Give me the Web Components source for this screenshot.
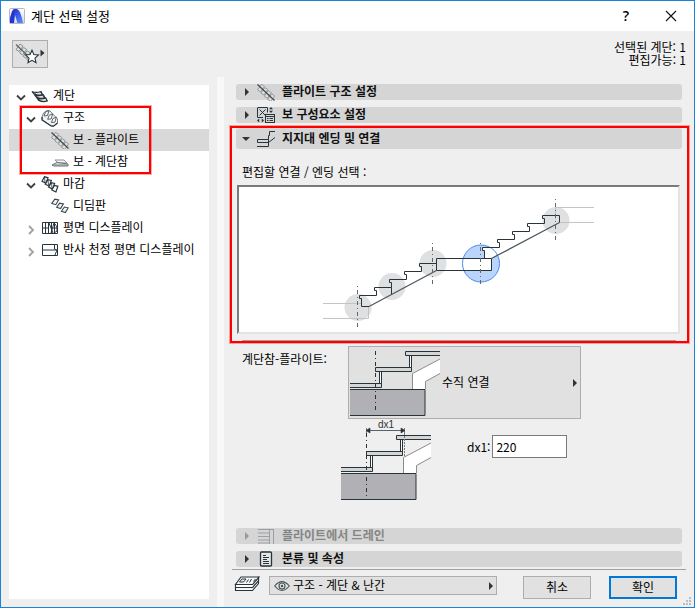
<!DOCTYPE html>
<html lang="ko">
<head>
<meta charset="utf-8">
<title>계단 선택 설정</title>
<style>
  html, body { margin: 0; height: 100%; }
  body { font: 12px/16px "Noto Sans CJK KR", "Noto Sans", sans-serif; color: #000; }
</style>
</head>
<body>
<stair-dialog></stair-dialog>

<script>
const INK = '#28343b';

/* One slanted tread repeated along the flight. */
const treads = (n, x, y, dx, dy, shape, attrs) =>
  Array.from({ length: n }, (_, i) =>
    `<path transform="translate(${x + i * dx} ${y + i * dy})" d="${shape}" ${attrs}/>`).join('');

const ICONS = {
  logo: [16, 16, `<defs><linearGradient id="g" x1="0" y1="0" x2="1" y2="1"><stop offset="0" stop-color="#1a24c8"/><stop offset="1" stop-color="#5c8cff"/></linearGradient>
    <linearGradient id="b" x1="0" y1="0" x2="0" y2="1"><stop offset="0" stop-color="#fff"/><stop offset="1" stop-color="#d4d6de"/></linearGradient></defs>
    <rect x=".5" y=".5" width="15" height="15" rx="1" fill="url(#b)" stroke="#b4b7c2"/>
    <path d="M1 15V11C2 6 3 2 5 1h3c3 1 5 8 6 14H8.500L6 7 5 15z" fill="url(#g)"/><path d="M1 15V11C2 7 3 4 4.500 3 6 5 5 10 5 15z" fill="#2433d6"/>`],
  star: [30, 22, `${treads(4, 4.5, 4.5, 3.6, 3.4, 'M-3.500 2 .5-3.500 3.500-1.500-.5 4z', 'fill="#dfe2e2" stroke="#7d8688" stroke-width=".9"')}
    <path d="M1 1.500 14 14" stroke="#59646a" stroke-width="1.200"/>
    <path d="M17 7.200l1.900 4.300 4.600.5-3.500 3.100 1 4.600-4-2.400-4 2.400 1-4.600-3.500-3.100 4.600-.5z" fill="#fff" stroke="${INK}" stroke-width="1.100"/>
    <path d="M25.500 6.500v7l4-3.500z" fill="#333"/>`],
  stair: [18, 16, `${treads(3, 1, 4, 2.4, 3.2, 'M0-.5C3 1 6 .5 9-.5l1.500 3C8 3.500 5 3.500 2 2z', `fill="#dfe3e4" stroke="${INK}" stroke-width="1.200"`)}
    <path d="M3.500 4.500l5 8M9.500 4l4.500 7" stroke="${INK}" stroke-width=".8"/>`],
  structure: [18, 18, `<path d="M1 8 2.500 4 6 1.500 9 2l7.500 8v4l-4 3.300-2.500-.6L1.500 11z" fill="#f2f3f3" stroke="#7b8387"/>
    ${treads(3, 3, 1.5, 3.7, 3.3, 'M0 5.500 1.500 1.500 5 0 3.500 5z', 'fill="#fff" stroke="#596367"')}
    <path d="M1 8v3l9 6 2.500.2 4-3.200" fill="none" stroke="${INK}" stroke-width="1.200"/>`],
  flight: [18, 17, `${treads(4, 4, 3.8, 3.4, 3.2, 'M-3.500 2 .5-3.500 3.500-1.500-.5 4z', 'fill="#e4e6e6" fill-opacity=".6" stroke="#8a9295" stroke-width=".9"')}
    <path d="M.5.5l17 16" stroke="#414c51" stroke-width="1.200"/>`],
  landing: [18, 16, `<path d="M4 6h9l3 3H7z" fill="#f4f5f5" stroke="#8b9396"/><path d="M1 11 6 8.500l11 1.500v2H3z" fill="#dfe2e3" stroke="#697276"/><path d="M1 11h16" stroke="#7b8488"/>`],
  finish: [18, 17, `${treads(4, 1, .8, 3.3, 2.9, 'M0 4.500 2.500 0 6 .8 4 6.500z', `fill="#fff" stroke="${INK}" stroke-width="1.200"`)}<path d="M3.500.8 4 6M7 3.700l.5 5.300M10.500 6.600l.5 5.300" stroke="${INK}" stroke-width=".8"/>`],
  tread: [18, 16, `${treads(3, .8, 1.2, 4.8, 3.9, 'M0 4.200 3 0 6.800.8 4 5.500z', 'fill="#f3f5f5" stroke="#3c474c" stroke-width="1.100"')}`],
  plan: [18, 16, `<path d="M1.500 2.500h15v11h-15zM1.500 8h6M4.500 2.500v11M7.500 2.500v11M10.500 2.500v11M13.500 2.500v11M8 3l4 10M13 3l-3 10M12 8h4" fill="none" stroke="${INK}"/><path d="M14 4l2 3v4l-3 2" fill="none" stroke="${INK}"/>`],
  ceiling: [18, 16, `<path d="M1.500 2.500h15v11h-15zM1.500 8h14" fill="none" stroke="${INK}"/><path d="M13.500 3v4l2.500 1-2 5" fill="none" stroke="${INK}"/>`],
  component: [18, 16, `<path d="M.5 1v9.500H6M.5.5h10v5" fill="none" stroke="${INK}"/><path d="M2.500 2.500l6 6M8.500 2.500l-6 6" stroke="${INK}"/>
    <path d="M14 0l2 2.200h-4zM14 6l2-2.200h-4zM0 13.500 2.200 11.500v4zM7 13.500 4.800 11.500v4z" fill="${INK}"/>
    <rect x="8.500" y="7.500" width="9" height="8" fill="#d5d5d5" stroke="${INK}"/><path d="M8.500 9.500h9M10 11.500h1.500m1 0h3.500M10 13.500h1.500m1 0h3.500" stroke="${INK}"/>`],
  support: [18, 16, `<path d="M18 .5h-5.500v4H11.500v4H.5v3h11V8.500M0 15.500h11.500v-4L18 6.500" fill="none" stroke="${INK}"/>`],
  drain: [18, 16, `<path d="M1 1.500h15M1 5h11M1 8.500h11M1 12h11M1 15h11M12.500 1v15M16.500 1v15" stroke="#9b9fa1" fill="none"/>`],
  document: [18, 16, `<rect x="3.500" y="1" width="11" height="14" rx="1" fill="#e4e6e6" stroke="${INK}" stroke-width="1.300"/><path d="M6 4.500h3M6 6.500h6M6 8.500h4M6 10.500h6M6 12.500h6" stroke="${INK}"/>`],
  layers: [26, 16, `<path d="M1.500 11.500v3h17l6-7v-3l-6 7z" fill="#f5f5f5" stroke="${INK}" stroke-width="1.100"/><path d="M1.500 8.500v3h17l6-7V1.500l-6 7z" fill="#fff" stroke="${INK}" stroke-width="1.100"/>
    <path d="M7 1h18l-6.500 7.500h-17z" fill="#f5f5f5" stroke="${INK}" stroke-width="1.100"/><path d="M8 3h4L9.500 6h-4zM14.500 3.500l-2 3M17.500 3l-2 3.500M21.500 3l-2 2.500" fill="none" stroke="${INK}"/>`],
  eye: [16, 12, `<path d="M.7 6Q8-2.800 15.300 6 8 14.800.7 6z" fill="none" stroke="#465156" stroke-width="1.100"/><circle cx="8" cy="6" r="3" fill="none" stroke="#465156" stroke-width="1.100"/><circle cx="8" cy="6" r="1.200" fill="#465156"/>`],
  arrow: [6, 8, `<path d="M1 0v8l4-4z" fill="currentColor"/>`],
  arrowdown: [8, 6, `<path d="M0 1h8L4 5z" fill="currentColor"/>`],
  chevopen: [10, 8, `<path d="M1 1.500l4 4 4-4" fill="none" stroke="#404040" stroke-width="1.800"/>`],
  chevclosed: [10, 10, `<path d="M3 1l4 4-4 4" fill="none" stroke="#a0a0a0" stroke-width="1.800"/>`],
  close: [12, 12, `<path d="M1 1l10 10M11 1 1 11" stroke="#111" stroke-width="1.100"/>`],
  grip: [8, 8, `<path d="M6 0h2v2H6zM3 3h2v2H3zM6 3h2v2H6zM0 6h2v2H0zM3 6h2v2H3zM6 6h2v2H6z" fill="#bdbdbd"/>`],
};

class UiElement extends HTMLElement {
  connectedCallback() {
    if (this.shadowRoot) return;
    this.attachShadow({ mode: 'open' }).innerHTML =
      `<style>*{box-sizing:border-box}button,input,select{font:inherit;color:inherit;margin:0}${this.css()}</style>${this.html()}`;
  }
}

customElements.define('ui-icon', class extends UiElement {
  css() { return ':host{display:inline-flex;flex:none}svg{display:block}'; }
  html() {
    const [w, h, body] = ICONS[this.getAttribute('name')];
    return `<svg width="${w}" height="${h}" viewBox="0 0 ${w} ${h}" aria-hidden="true">${body}</svg>`;
  }
});

/* Red callout drawn over whatever it surrounds. */
customElements.define('call-out', class extends UiElement {
  css() { return `:host{display:block;position:relative}
    .ring{position:absolute;inset:var(--ring,0);border:2px solid #f00;outline:1px solid #ff000055;outline-offset:0;pointer-events:none}`; }
  html() { return '<slot></slot><div class="ring"></div>'; }
});

customElements.define('title-bar', class extends UiElement {
  css() { return `:host{display:flex;align-items:center;height:30px;background:#fff;padding:0 13px 0 8px}
    h1{font-size:13px;line-height:20px;font-weight:400;margin:0 auto 0 6px}
    button{border:0;background:none;padding:0;width:20px;height:20px;display:flex;align-items:center;justify-content:center}
    .help{font:600 14px/20px "Open Sans",sans-serif;margin-right:25px}`; }
  html() { return `<ui-icon name="logo"></ui-icon><h1><slot></slot></h1>
    <button class="help" aria-label="도움말">?</button><button aria-label="닫기"><ui-icon name="close"></ui-icon></button>`; }
});

customElements.define('tree-row', class extends UiElement {
  css() { return `:host{display:block}
    button{display:flex;align-items:center;width:100%;height:22px;border:0;background:none;text-align:left;white-space:nowrap;
      padding:0 0 0 calc(7px + 10px * ${this.getAttribute('level')})}
    :host([selected]) button{background:#d9d9d9}
    .chev{width:10px;margin-right:5px;display:flex;padding-top:3px}
    .pic{width:18px;margin-right:4px}
    .text{padding-bottom:2px}`; }
  html() {
    const s = this.getAttribute('state');
    return `<button><span class="chev">${s ? `<ui-icon name="chev${s}"></ui-icon>` : ''}</span>
      <ui-icon class="pic" name="${this.getAttribute('icon')}"></ui-icon><span class="text"><slot></slot></span></button>`;
  }
});

customElements.define('section-bar', class extends UiElement {
  css() { return `:host{display:block}
    button{display:flex;align-items:center;width:100%;height:16px;border:0;border-radius:3px;background:#d5d5d5;padding:0 8px;text-align:left;font-weight:700;color:#111}
    :host([open]) button{height:21px;padding-left:6px}
    .mark{width:13px;display:flex;color:#333}
    :host([open]) .mark{width:15px}
    ui-icon.pic{margin-right:7px}
    .text{line-height:16px;padding-bottom:2px}
    button:disabled{color:#858585}
    button:disabled .mark{color:#999}`; }
  html() { return `<button ${this.hasAttribute('disabled') ? 'disabled' : ''} aria-expanded="${this.hasAttribute('open')}">
      <span class="mark"><ui-icon name="${this.hasAttribute('open') ? 'arrowdown' : 'arrow'}"></ui-icon></span>
      <ui-icon class="pic" name="${this.getAttribute('icon')}"></ui-icon><span class="text"><slot></slot></span></button>`; }
});

customElements.define('stair-preview', class extends UiElement {
  css() { return `:host{display:block;background:#fff;border:2px solid;border-color:#7a7a7a #e3e3e3 #e3e3e3 #7a7a7a}
    svg{display:block;width:100%;height:145px}`; }
  html() { return `<svg viewBox="239 187 439 145" role="img" aria-label="계단 단면" fill="none">
    <g fill="#dfe0e2"><circle cx="358" cy="307.500" r="13.500"/><circle cx="392" cy="286.500" r="13.500"/><circle cx="433" cy="263.500" r="13.500"/><circle cx="556" cy="220.500" r="13.500"/></g>
    <circle cx="481" cy="263.500" r="18.500" fill="#bad4fc"/>
    <path d="M484.500 258.500v-8h-2v-3h17v5l-8 6v12H462v-12z" fill="#fff"/>
    <circle cx="481" cy="263.500" r="18.500" stroke="#4a8cf0"/>
    <path d="M323 303.500h38M323 318.500h45.500v-12M594 207.500h-38.500v12M559 222.500h35" stroke="#c4c4c4"/>
    <g stroke="${INK}">
      <path d="M369 306.500h-7.500v-8h-2v-3h17v-5h-2v-3h17v-5h-2v-3h17v-5h-2v-3h17v-5h-2v-3h17M391.500 287.500v7"/>
      <path d="M436.500 258.500h55v12h-55z"/>
      <path d="M484.500 258.500v-8h-2v-3h17v-5h-2v-3h17v-5h-2v-3h17v-5h-2v-3h17v-5h-2v-3h17v7"/>
      <path d="M369 306.500l67.500-36M491.500 258.500l68-36" stroke="#4c565b" stroke-width="1.200"/>
    </g>
    <path d="M357.500 286v41M432.500 243v41M480.500 243v41M555.500 199v41" stroke="#666" stroke-dasharray="1 3 4 3"/></svg>`; }
});

/* Tread, riser, slab and stringer detail; the "dimension" attribute adds the dx1 measure. */
customElements.define('stair-detail', class extends UiElement {
  css() { return ':host{display:block;flex:none}svg{display:block}text{font:10px "Liberation Sans",sans-serif}'; }
  html() {
    const dim = this.hasAttribute('dimension');
    const top = dim ? 14 : 0;
    return `<svg width="90" height="${67 + top}" viewBox="0 ${-top} 90 ${67 + top}" role="img" aria-label="연결 상세">
      <path d="M62.500 40V24.500L90 10v14.500L75.500 32.500V40z" fill="#fff"/><path d="M62.500 40V24.500L90 10M90 24.500 75.500 32.500V40" fill="none" stroke="#8c8c8c"/>
      <path d="M-2 40.500h77v26H-2z" fill="#b1b0b5" stroke="${INK}"/>
      <g fill="#d3d6d4" stroke="${INK}"><path d="M59.500 6.500h2v12h-2zM29.500 22.500h2v12h-2z" fill="#fff"/><path d="M55.500 2.500H92v4H55.500zM25.500 18.500h36v4h-36zM-2 34.500h33.500v4H-2z"/></g>
      <path d="M25.500 ${dim ? 0 : 2}V63" stroke="${INK}" stroke-dasharray="4 3 1 3"/>
      ${dim ? `<path d="M63.500 0v24" stroke="#777" stroke-dasharray="2 1"/><path d="M27-2.500h35" stroke="#59646a"/>
        <path d="M25-2.500l4-2.500v5zM64-2.500l-4-2.500v5zM25.500-5v5M63.500-5v5" fill="${INK}" stroke="${INK}" stroke-width=".6"/>
        <text x="37" y="-5" fill="#333">dx1</text>` : ''}</svg>`;
  }
});

customElements.define('connection-form', class extends UiElement {
  css() { return `:host{display:grid;grid-template-columns:99px 7px minmax(0,233px);padding:0 0 0 6px}
    .name{padding-top:5px}
    .choice{grid-column:3;display:flex;align-items:center;height:73px;border:1px solid #adadad;background:#e1e1e1;padding:0 2px 0 1px;text-align:left}
    .choice span{margin:0 auto 0 2px;padding-bottom:2px}
    .choice ui-icon{color:#333}
    .detail{grid-column:2 / 4;display:flex;align-items:flex-start}
    .field{display:flex;align-items:center;margin:16px 0 0 36px;gap:2px}
    input{width:75px;height:23px;border:1px solid #7a7a7a;background:#fff;padding:0 3px 1px}`; }
  html() { return `<label class="name" for="kind">계단참-플라이트:</label>
    <button class="choice" id="kind"><stair-detail></stair-detail><span>수직 연결</span><ui-icon name="arrow"></ui-icon></button>
    <div class="detail"><stair-detail dimension></stair-detail>
      <div class="field"><label for="dx">dx1:</label><input id="dx" value="220"></div></div>`; }
});

customElements.define('dialog-footer', class extends UiElement {
  css() { return `:host{display:flex;align-items:flex-start;border-top:1px solid #a0a0a0;padding:6px 9px 8px 2px}
    .pick{display:flex;align-items:center;flex:0 1 228px;height:19px;margin:0 25px 0 9px;border:1px solid #adadad;background:#e1e1e1;padding:0 2px 0 4px}
    .pick ui-icon{color:#333}
    select{appearance:none;flex:1;min-width:0;height:17px;border:0;background:none;padding:0 0 2px 3px;line-height:15px}
    .act{width:68px;height:23px;border:1px solid #adadad;background:#e1e1e1;padding:0 0 2px}
    .ok{border:2px solid #0078d7;margin-left:18px}
    .pick+.act{margin-left:auto}`; }
  html() { return `<ui-icon name="layers"></ui-icon>
    <div class="pick"><ui-icon name="eye"></ui-icon><select aria-label="레이어"><option>구조 - 계단 &amp; 난간</option></select><ui-icon name="arrow"></ui-icon></div>
    <button class="act">취소</button><button class="act ok">확인</button>`; }
});

customElements.define('stair-dialog', class extends UiElement {
  css() { return `:host{display:flex;flex-direction:column;box-sizing:border-box;min-height:100vh;background:#efefef;border:1px solid #1883d7;position:relative}
    .body{flex:1;display:grid;grid-template-columns:200px 7px minmax(0,1fr);column-gap:8px;padding:0 0 0 8px}
    .left{display:flex;flex-direction:column;padding-bottom:8px}
    .fav{width:36px;height:28px;margin:9px 0 17px 3px;border:1px solid #adadad;background:#e1e1e1;padding:0;display:flex;align-items:center;justify-content:center}
    nav{flex:1;background:#fff}
    nav call-out{--ring:-1px 58px -1px 11px}
    .split{background:#f8f8f8;margin-top:46px}
    .right{display:flex;flex-direction:column}
    .count{margin:9px 8px 18px auto;text-align:right}
    .count div{line-height:13px}
    .stack{padding:0 12px 0 4px;display:flex;flex-direction:column;gap:7px}
    .open{margin-top:-2px;--ring:-2px -7px -2px -6px}
    .open p{margin:12px 0 2px 6px;line-height:22px}
    stair-preview{margin:0 2px 0 1px}
    hr{margin:6px 6px 0;border:0;height:1px;background:#a0a0a0}
    connection-form{margin-top:-2px}
    .bottom{margin:auto 0 2px}
    dialog-footer{margin-right:8px}
    .grip{position:absolute;right:3px;bottom:2px}`; }
  html() { return `<title-bar>계단 선택 설정</title-bar>
  <div class="body">
    <div class="left">
      <button class="fav" aria-label="즐겨찾기"><ui-icon name="star"></ui-icon></button>
      <nav>
        <tree-row level="0" state="open" icon="stair">계단</tree-row>
        <call-out>
          <tree-row level="1" state="open" icon="structure">구조</tree-row>
          <tree-row level="2" icon="flight" selected>보 - 플라이트</tree-row>
          <tree-row level="2" icon="landing">보 - 계단참</tree-row>
        </call-out>
        <tree-row level="1" state="open" icon="finish">마감</tree-row>
        <tree-row level="2" icon="tread">디딤판</tree-row>
        <tree-row level="1" state="closed" icon="plan">평면 디스플레이</tree-row>
        <tree-row level="1" state="closed" icon="ceiling">반사 천정 평면 디스플레이</tree-row>
      </nav>
    </div>
    <div class="split"></div>
    <div class="right">
      <div class="count"><div>선택된 계단: 1</div><div>편집가능: 1</div></div>
      <div class="stack">
        <section-bar icon="flight">플라이트 구조 설정</section-bar>
        <section-bar icon="component">보 구성요소 설정</section-bar>
        <call-out class="open">
          <section-bar icon="support" open>지지대 엔딩 및 연결</section-bar>
          <p>편집할 연결 / 엔딩 선택 :</p>
          <stair-preview></stair-preview>
          <hr>
        </call-out>
        <connection-form></connection-form>
      </div>
      <div class="stack bottom">
        <section-bar icon="drain" disabled>플라이트에서 드레인</section-bar>
        <section-bar icon="document">분류 및 속성</section-bar>
      </div>
      <dialog-footer></dialog-footer>
    </div>
  </div>
  <ui-icon class="grip" name="grip"></ui-icon>`; }
});
</script>
</body>
</html>
